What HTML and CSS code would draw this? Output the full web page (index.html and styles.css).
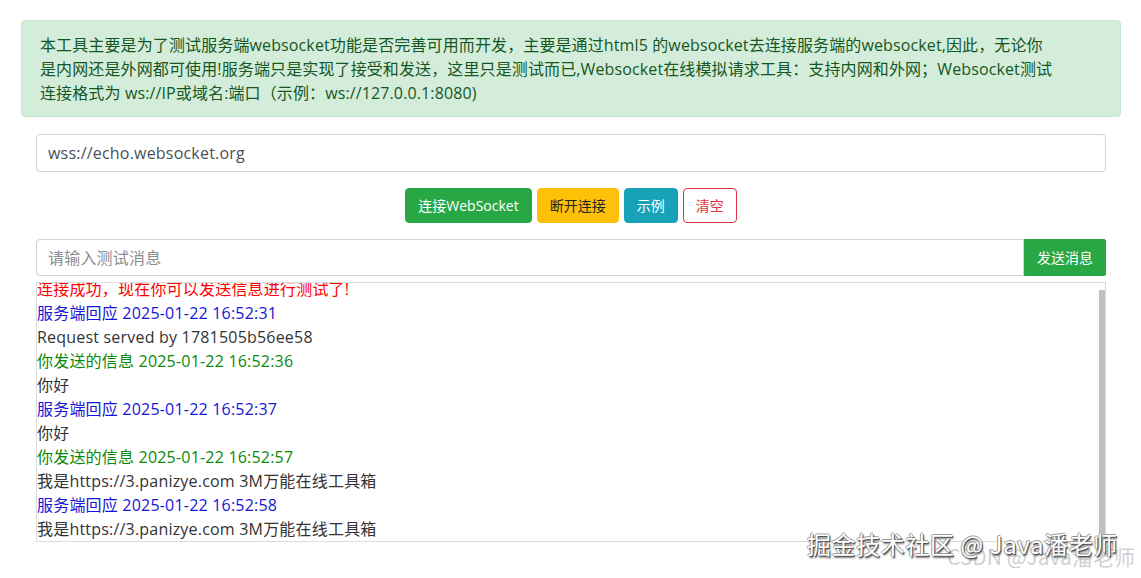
FILE: index.html
```html
<!DOCTYPE html>
<html lang="zh-CN">
<head>
<meta charset="utf-8">
<title>Websocket在线测试</title>
<link rel="stylesheet" href="styles.css">
</head>
<body>
<div class="page">
  <div class="alert">
    本工具主要是为了测试服务端websocket功能是否完善可用而开发，主要是通过html5 的websocket去连接服务端的websocket,因此，无论你<br>是内网还是外网都可使用!服务端只是实现了接受和发送，这里只是测试而已,Websocket在线模拟请求工具：支持内网和外网；Websocket测试<br>连接格式为 ws://IP或域名:端口（示例：ws://127.0.0.1:8080)
  </div>
  <div class="form">
    <input class="field url" type="text" value="wss://echo.websocket.org">
    <div class="btns">
      <button class="btn btn-green">连接WebSocket</button>
      <button class="btn btn-yellow">断开连接</button>
      <button class="btn btn-teal">示例</button>
      <button class="btn btn-outline-red">清空</button>
    </div>
    <div class="group">
      <input class="field msg" type="text" placeholder="请输入测试消息">
      <button class="btn btn-green send">发送消息</button>
    </div>
    <div class="logwrap">
      <div class="log">
        <div class="l red">连接成功，现在你可以发送信息进行测试了!</div>
        <div class="l blue">服务端回应 2025-01-22 16:52:31</div>
        <div class="l">Request served by 1781505b56ee58</div>
        <div class="l green">你发送的信息 2025-01-22 16:52:36</div>
        <div class="l">你好</div>
        <div class="l blue">服务端回应 2025-01-22 16:52:37</div>
        <div class="l">你好</div>
        <div class="l green">你发送的信息 2025-01-22 16:52:57</div>
        <div class="l">我是https://3.panizye.com 3M万能在线工具箱</div>
        <div class="l blue">服务端回应 2025-01-22 16:52:58</div>
        <div class="l">我是https://3.panizye.com 3M万能在线工具箱</div>
      </div>
      <div class="thumb"></div>
    </div>
  </div>
  <div class="wm">
    <span class="wm-csdn">CSDN @Java潘老师</span>
    <span class="wm-juejin">掘金技术社区 @ Java潘老师</span>
  </div>
</div>
</body>
</html>
```
FILE: styles.css
```css
html, body {
  margin: 0;
  padding: 0;
  background: #fff;
}
body {
  font-family: "Open Sans", "Noto Sans CJK SC", sans-serif;
  color: #333;
  width: 1141px;
  height: 578px;
  overflow: hidden;
  position: relative;
}
.page {
  padding: 20px 20px 0 21px;
}
.alert {
  background: #d4edda;
  border: 1px solid #c3e6cb;
  border-radius: 4px;
  color: #155724;
  font-size: 16px;
  line-height: 24px;
  padding: 12px 18px 11px 18px;
  white-space: nowrap;
  letter-spacing: 0.12px;
}
.form {
  padding: 17px 15px 0 15px;
  display: flex;
  flex-direction: column;
}
.field {
  box-sizing: border-box;
  font-family: inherit;
  font-size: 16px;
  color: #495057;
  border: 1px solid #ced4da;
  border-radius: 4px;
  padding: 0 11px;
  outline: none;
  background: #fff;
  letter-spacing: 0.2px;
}
.field::placeholder {
  color: #8a8f94;
}
.url {
  height: 38px;
  width: 100%;
}
.btns {
  display: flex;
  justify-content: center;
  gap: 5px;
  margin: 16px 0;
}
.btn {
  box-sizing: border-box;
  height: 35px;
  font-family: inherit;
  font-size: 14px;
  line-height: 21px;
  padding: 6px 12px;
  border: 1px solid transparent;
  border-radius: 4px;
  cursor: pointer;
}
.btn-green {
  background: #28a745;
  border-color: #28a745;
  color: #fff;
}
.btn-yellow {
  background: #ffc107;
  border-color: #ffc107;
  color: #212529;
}
.btn-teal {
  background: #17a2b8;
  border-color: #17a2b8;
  color: #fff;
}
.btn-outline-red {
  background: #fff;
  border-color: #dc3545;
  color: #dc3545;
}
.group {
  display: flex;
  height: 37px;
}
.msg {
  flex: 1;
  height: 37px;
  border-radius: 4px 0 0 4px;
}
.send {
  height: 37px;
  width: 82px;
  border-radius: 0 2px 2px 0;
  padding: 0;
}
.logwrap {
  position: relative;
  margin-top: 6px;
}
.log {
  box-sizing: border-box;
  height: 260px;
  border: 1px solid #dcdcdc;
  overflow: hidden;
  display: flex;
  flex-direction: column;
  justify-content: flex-end;
  font-size: 16px;
  line-height: 24px;
  color: #333;
  letter-spacing: 0.2px;
}
.thumb {
  position: absolute;
  right: 1px;
  top: 8px;
  width: 6px;
  bottom: 1px;
  background: #c1c1c1;
}
.l {
  white-space: nowrap;
  flex: none;
}
.red { color: #f00; }
.blue { color: #1515d8; }
.green { color: #0a8a0a; }
.wm {
  position: absolute;
  left: 0;
  top: 0;
  width: 0;
  height: 0;
}
.wm-csdn {
  position: absolute;
  left: 947px;
  top: 541px;
  font-family: "Noto Sans CJK SC", sans-serif;
  font-size: 21px;
  color: rgba(200, 200, 200, 0.85);
  white-space: nowrap;
}
.wm-juejin {
  position: absolute;
  left: 807px;
  top: 526px;
  font-family: "Noto Sans CJK SC", sans-serif;
  font-size: 24px;
  letter-spacing: 0.6px;
  color: #fff;
  white-space: nowrap;
  text-shadow: 1px 1px 0 #555, -1px 0 0 #999, 0 -1px 0 #999, 1px 2px 2px #666;
}
```
